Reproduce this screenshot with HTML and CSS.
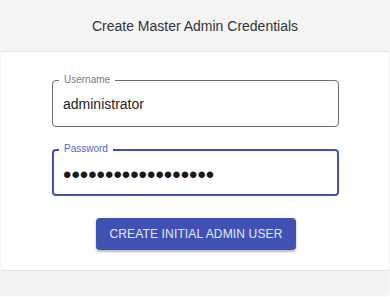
FILE: index.html
```html
<!DOCTYPE html>
<html>
<head>
<meta charset="utf-8">
<link rel="stylesheet" href="styles.css">
</head>
<body>
<div class="card">
  <div class="card-header">Create Master Admin Credentials</div>
  <div class="card-body">
    <div class="field">
      <span class="field-label">Username</span>
      <span class="field-value">administrator</span>
    </div>
    <div class="field field-focused">
      <span class="field-label">Password</span>
      <span class="field-value dots">••••••••••••••••••</span>
    </div>
    <div class="actions">
      <button class="btn">CREATE INITIAL ADMIN USER</button>
    </div>
  </div>
  <div class="card-footer"></div>
</div>
</body>
</html>
```
FILE: styles.css
```css
html, body {
  margin: 0;
  padding: 0;
  background: #ffffff;
}
body {
  font-family: "Liberation Sans", Arial, sans-serif;
  width: 390px;
  height: 297px;
  overflow: hidden;
}
.card {
  margin: 0 1px;
  background: #ffffff;
  box-shadow: 0 0 2px rgba(0,0,0,0.12);
}
.card-header {
  height: 51px;
  background: #f4f4f4;
  border-bottom: 1px solid #e4e4e4;
  display: flex;
  align-items: center;
  justify-content: center;
  font-size: 14px;
  color: #333333;
}
.card-body {
  display: flex;
  flex-direction: column;
  padding: 28px 50px 20px 51px;
  gap: 22px;
}
.field {
  position: relative;
  height: 45px;
  border: 1px solid #6e6e6e;
  border-radius: 4px;
  display: flex;
  align-items: center;
  padding: 0 10px;
}
.field-focused {
  height: 43px;
  border: 2px solid #3f51b5;
  padding: 0 9px;
}
.field-label {
  position: absolute;
  top: -7px;
  left: 6px;
  padding: 0 5px;
  background: #ffffff;
  font-size: 10px;
  line-height: 12px;
  color: #7a7a7a;
}
.field-focused .field-label {
  left: 5px;
  top: -8px;
  color: #5563bd;
}
.field-value {
  font-size: 14px;
  color: #222222;
}
.dots {
  font-size: 24px;
  line-height: 20px;
  color: #1a1a1a;
  margin-top: 4px;
}
.actions {
  display: flex;
  justify-content: center;
  padding-left: 1px;
}
.btn {
  display: block;
  width: 200px;
  height: 32px;
  border: none;
  border-radius: 4px;
  background: #3f51b5;
  color: #e8eaf6;
  font-family: "Liberation Sans", Arial, sans-serif;
  font-size: 12px;
  letter-spacing: 0.15px;
  box-shadow: 0 2px 2px rgba(0,0,0,0.2), 0 1px 4px rgba(0,0,0,0.12);
  padding: 0;
}
.card-footer {
  height: 24px;
  background: #f3f3f3;
  border-top: 1px solid #e4e4e4;
}
```
